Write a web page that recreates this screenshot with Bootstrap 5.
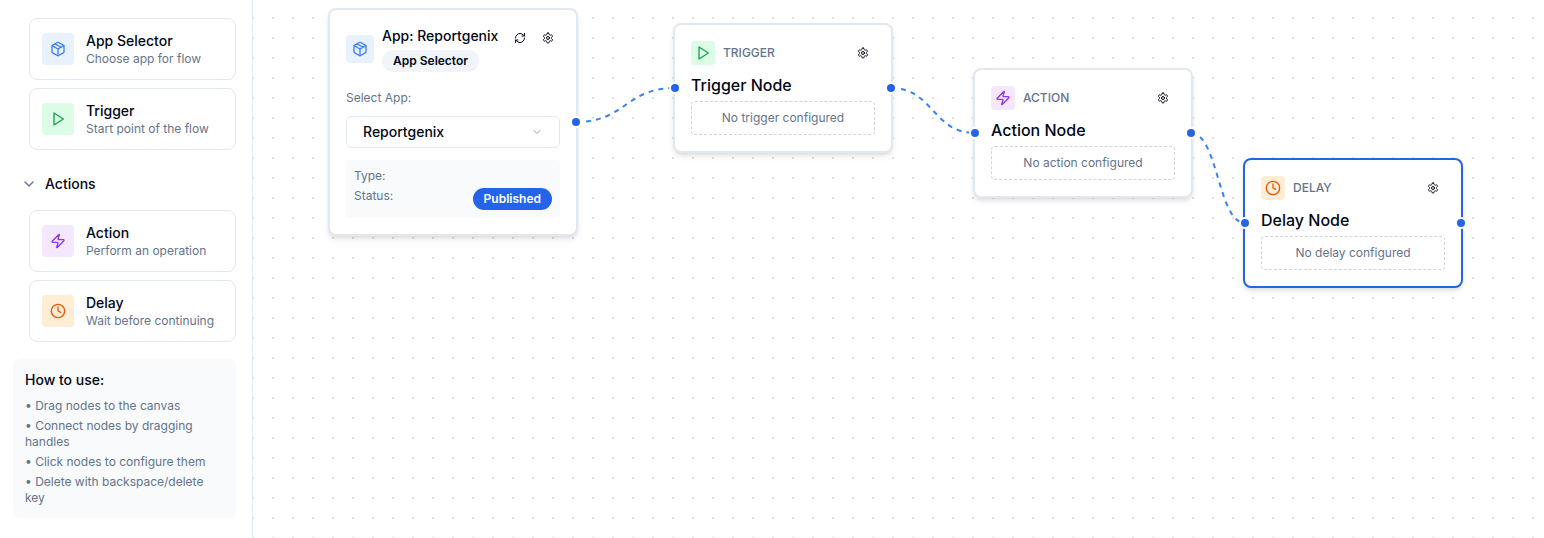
<!DOCTYPE html>
<html lang="en">
<head>
  <title>Flow Builder</title>
  <meta charset="UTF-8">
  <meta name="viewport" content="width=device-width, initial-scale=1.0">
  <link rel="stylesheet" href="https://cdn.jsdelivr.net/npm/bootstrap@5.3.0/dist/css/bootstrap.min.css">
  <style>
    body {
      font-family: Inter, "Liberation Sans", sans-serif;
      color: #020817;
      background-color: #fff;
      overflow: hidden;
    }
    svg.ico {
      fill: none;
      stroke: currentColor;
      stroke-width: 2;
      stroke-linecap: round;
      stroke-linejoin: round;
      flex-shrink: 0;
    }

    /* sidebar */
    .side-panel {
      width: 253px;
      flex-shrink: 0;
      padding: 18px 16px 0 13px;
      border-right: 1px solid #e2e8f0;
    }
    .palette-item {
      margin-left: 16px;
      margin-bottom: 8px;
      padding: 12px;
      border: 1px solid #e2e8f0;
      border-radius: 8px;
      gap: 12px;
    }
    .tile {
      border-radius: 4px;
      flex-shrink: 0;
    }
    .tile-32 { width: 32px; height: 32px; }
    .tile-28 { width: 28px; height: 28px; }
    .tile-24 { width: 24px; height: 24px; }
    .tile-blue { background-color: #eaf1fe; color: #3b82f6; }
    .tile-green { background-color: #dcfce7; color: #16a34a; }
    .tile-purple { background-color: #f3e8ff; color: #9333ea; }
    .tile-orange { background-color: #ffedd5; color: #ea580c; }
    .item-title {
      font-size: 14px;
      line-height: 20px;
      font-weight: 500;
    }
    .item-sub {
      font-size: 12px;
      line-height: 16px;
      color: #64748b;
    }
    .group-head {
      margin: 24px 0 16px 8px;
      gap: 8px;
      font-size: 14px;
      line-height: 20px;
      font-weight: 500;
      color: #64748b;
    }
    .group-head span { color: #020817; }
    .help-box {
      margin-top: 16px;
      padding: 12px;
      border-radius: 8px;
      background-color: #f8fafc;
    }
    .help-box h6 {
      font-size: 14px;
      line-height: 20px;
      font-weight: 500;
      margin-bottom: 8px;
    }
    .help-box ul {
      list-style: none;
      padding: 0;
      margin: 0;
      font-size: 12px;
      line-height: 16px;
      color: #64748b;
    }
    .help-box li + li { margin-top: 4px; }

    /* canvas */
    .flow-canvas {
      position: relative;
      flex-grow: 1;
      background-image: radial-gradient(circle, #e0e0e0 1.2px, transparent 1.2px);
      background-size: 20px 20px;
      background-position: 10px 8px;
    }
    .edge-layer {
      position: absolute;
      left: 0;
      top: 0;
      width: 100%;
      height: 100%;
    }
    .edge-layer path {
      fill: none;
      stroke: #3b82f6;
      stroke-width: 2;
      stroke-dasharray: 5 5;
    }
    .flow-node {
      position: absolute;
      width: 220px;
      padding: 16px;
      background-color: #fff;
      border: 2px solid #e2e8f0;
      border-radius: 8px;
      box-shadow: 0 4px 6px -1px rgba(0,0,0,0.1), 0 2px 4px -2px rgba(0,0,0,0.1);
    }
    .flow-node.selected { border-color: #2563eb; }
    .node-app { left: 75px; top: 8px; width: 250px; }
    .node-trigger { left: 420px; top: 23px; }
    .node-action { left: 720px; top: 68px; }
    .node-delay { left: 990px; top: 158px; }
    .handle-dot {
      position: absolute;
      top: 50%;
      width: 12px;
      height: 12px;
      border: 2px solid #fff;
      border-radius: 50%;
      background-color: #2563eb;
      transform: translate(-50%, -50%);
    }
    .handle-dot.in { left: 0; }
    .handle-dot.out { left: 100%; }
    .icon-btn {
      width: 24px;
      height: 24px;
      padding: 0;
      border: 0;
      background: transparent;
      color: #020817;
      flex-shrink: 0;
    }
    .node-kind {
      font-size: 12px;
      line-height: 16px;
      font-weight: 500;
      color: #64748b;
      text-transform: uppercase;
    }
    .node-title {
      margin-top: 8px;
      font-size: 16px;
      line-height: 24px;
      font-weight: 500;
    }
    .empty-note {
      margin-top: 4px;
      padding: 8px;
      border: 1px dashed #d1d5db;
      border-radius: 4px;
      font-size: 12px;
      line-height: 16px;
      color: #64748b;
      text-align: center;
    }
    .app-name {
      font-size: 14px;
      line-height: 20px;
      font-weight: 500;
    }
    .type-pill {
      margin-top: 4px;
      padding: 3px 11px;
      font-size: 12px;
      line-height: 16px;
      font-weight: 600;
      color: #020817;
      background-color: #f1f5f9;
    }
    .field-label {
      margin: 17px 0 9px;
      font-size: 12px;
      line-height: 18px;
      color: #64748b;
    }
    .fake-select {
      height: 32px;
      padding: 0 16px 1px 16px;
      border: 1px solid #e2e8f0;
      border-radius: 6px;
      font-size: 14px;
      font-weight: 500;
    }
    .fake-select svg { color: #94a3b8; }
    .info-box {
      margin-top: 12px;
      padding: 8px;
      border-radius: 4px;
      background-color: #f8fafc;
      font-size: 12px;
      line-height: 16px;
      color: #64748b;
    }
    .status-pill {
      padding: 3px 11px;
      font-size: 12px;
      line-height: 16px;
      font-weight: 600;
      color: #fff;
      background-color: #2563eb;
    }
  </style>
</head>
<body>
  <!-- icon set -->
  <svg width="0" height="0" class="position-absolute">
    <symbol id="i-package" viewBox="0 0 24 24">
      <path d="m7.5 4.27 9 5.15"/>
      <path d="M21 8a2 2 0 0 0-1-1.73l-7-4a2 2 0 0 0-2 0l-7 4A2 2 0 0 0 3 8v8a2 2 0 0 0 1 1.73l7 4a2 2 0 0 0 2 0l7-4A2 2 0 0 0 21 16Z"/>
      <path d="m3.3 7 8.7 5 8.7-5"/>
      <path d="M12 22V12"/>
    </symbol>
    <symbol id="i-play" viewBox="0 0 24 24"><polygon points="6 3 20 12 6 21 6 3"/></symbol>
    <symbol id="i-zap" viewBox="0 0 24 24">
      <path d="M4 14a1 1 0 0 1-.78-1.63l9.9-10.2a.5.5 0 0 1 .86.46l-1.92 6.02A1 1 0 0 0 13 10h7a1 1 0 0 1 .78 1.63l-9.9 10.2a.5.5 0 0 1-.86-.46l1.92-6.02A1 1 0 0 0 11 14z"/>
    </symbol>
    <symbol id="i-clock" viewBox="0 0 24 24"><circle cx="12" cy="12" r="10"/><polyline points="12 6 12 12 16 14"/></symbol>
    <symbol id="i-chevron" viewBox="0 0 24 24"><path d="m6 9 6 6 6-6"/></symbol>
    <symbol id="i-refresh" viewBox="0 0 24 24">
      <path d="M3 12a9 9 0 0 1 9-9 9.75 9.75 0 0 1 6.74 2.74L21 8"/>
      <path d="M21 3v5h-5"/>
      <path d="M21 12a9 9 0 0 1-9 9 9.75 9.75 0 0 1-6.74-2.74L3 16"/>
      <path d="M8 16H3v5"/>
    </symbol>
    <symbol id="i-gear" viewBox="0 0 24 24">
      <path d="M12.22 2h-.44a2 2 0 0 0-2 2v.18a2 2 0 0 1-1 1.73l-.43.25a2 2 0 0 1-2 0l-.15-.08a2 2 0 0 0-2.73.73l-.22.38a2 2 0 0 0 .73 2.73l.15.1a2 2 0 0 1 1 1.72v.51a2 2 0 0 1-1 1.74l-.15.09a2 2 0 0 0-.73 2.73l.22.38a2 2 0 0 0 2.73.73l.15-.08a2 2 0 0 1 2 0l.43.25a2 2 0 0 1 1 1.73V20a2 2 0 0 0 2 2h.44a2 2 0 0 0 2-2v-.18a2 2 0 0 1 1-1.73l.43-.25a2 2 0 0 1 2 0l.15.08a2 2 0 0 0 2.73-.73l.22-.39a2 2 0 0 0-.73-2.73l-.15-.08a2 2 0 0 1-1-1.74v-.5a2 2 0 0 1 1-1.74l.15-.09a2 2 0 0 0 .73-2.73l-.22-.38a2 2 0 0 0-2.73-.73l-.15.08a2 2 0 0 1-2 0l-.43-.25a2 2 0 0 1-1-1.73V4a2 2 0 0 0-2-2z"/>
      <circle cx="12" cy="12" r="3"/>
    </symbol>
  </svg>

  <div class="d-flex vh-100">
    <!-- left palette -->
    <aside class="side-panel">
      <div class="palette-item d-flex align-items-center">
        <div class="tile tile-32 tile-blue d-flex align-items-center justify-content-center">
          <svg class="ico" width="16" height="16"><use href="#i-package"/></svg>
        </div>
        <div>
          <div class="item-title">App Selector</div>
          <div class="item-sub">Choose app for flow</div>
        </div>
      </div>
      <div class="palette-item d-flex align-items-center">
        <div class="tile tile-32 tile-green d-flex align-items-center justify-content-center">
          <svg class="ico" width="16" height="16"><use href="#i-play"/></svg>
        </div>
        <div>
          <div class="item-title">Trigger</div>
          <div class="item-sub">Start point of the flow</div>
        </div>
      </div>

      <div class="group-head d-flex align-items-center">
        <svg class="ico" width="16" height="16"><use href="#i-chevron"/></svg>
        <span>Actions</span>
      </div>

      <div class="palette-item d-flex align-items-center">
        <div class="tile tile-32 tile-purple d-flex align-items-center justify-content-center">
          <svg class="ico" width="16" height="16"><use href="#i-zap"/></svg>
        </div>
        <div>
          <div class="item-title">Action</div>
          <div class="item-sub">Perform an operation</div>
        </div>
      </div>
      <div class="palette-item d-flex align-items-center">
        <div class="tile tile-32 tile-orange d-flex align-items-center justify-content-center">
          <svg class="ico" width="16" height="16"><use href="#i-clock"/></svg>
        </div>
        <div>
          <div class="item-title">Delay</div>
          <div class="item-sub">Wait before continuing</div>
        </div>
      </div>

      <div class="help-box">
        <h6>How to use:</h6>
        <ul>
          <li>• Drag nodes to the canvas</li>
          <li>• Connect nodes by dragging handles</li>
          <li>• Click nodes to configure them</li>
          <li>• Delete with backspace/delete key</li>
        </ul>
      </div>
    </aside>

    <!-- flow canvas, nodes are placed by their canvas coordinates -->
    <main class="flow-canvas">
      <svg class="edge-layer">
        <path d="M323 122 C372.5 122 372.5 88 422 88"/>
        <path d="M638 88 C680 88 680 133 722 133"/>
        <path d="M938 133 C965 133 965 223 992 223"/>
      </svg>

      <div class="flow-node node-app">
        <div class="d-flex align-items-center gap-2">
          <div class="tile tile-28 tile-blue d-flex align-items-center justify-content-center">
            <svg class="ico" width="16" height="16"><use href="#i-package"/></svg>
          </div>
          <div class="flex-grow-1">
            <div class="app-name">App: Reportgenix</div>
            <span class="badge rounded-pill type-pill">App Selector</span>
          </div>
          <div class="d-flex gap-1 align-self-start">
            <button class="icon-btn d-flex align-items-center justify-content-center"><svg class="ico" width="12" height="12"><use href="#i-refresh"/></svg></button>
            <button class="icon-btn d-flex align-items-center justify-content-center"><svg class="ico" width="12" height="12"><use href="#i-gear"/></svg></button>
          </div>
        </div>
        <div class="field-label">Select App:</div>
        <div class="fake-select d-flex align-items-center justify-content-between">
          <span>Reportgenix</span>
          <svg class="ico" width="12" height="12"><use href="#i-chevron"/></svg>
        </div>
        <div class="info-box">
          <div>Type:</div>
          <div class="d-flex justify-content-between align-items-start mt-1">
            <span>Status:</span>
            <span class="badge rounded-pill status-pill">Published</span>
          </div>
        </div>
        <span class="handle-dot out"></span>
      </div>

      <div class="flow-node node-trigger">
        <div class="d-flex align-items-center gap-2">
          <div class="tile tile-24 tile-green d-flex align-items-center justify-content-center">
            <svg class="ico" width="16" height="16"><use href="#i-play"/></svg>
          </div>
          <span class="node-kind flex-grow-1">Trigger</span>
          <button class="icon-btn d-flex align-items-center justify-content-center"><svg class="ico" width="12" height="12"><use href="#i-gear"/></svg></button>
        </div>
        <div class="node-title">Trigger Node</div>
        <div class="empty-note">No trigger configured</div>
        <span class="handle-dot in"></span>
        <span class="handle-dot out"></span>
      </div>

      <div class="flow-node node-action">
        <div class="d-flex align-items-center gap-2">
          <div class="tile tile-24 tile-purple d-flex align-items-center justify-content-center">
            <svg class="ico" width="16" height="16"><use href="#i-zap"/></svg>
          </div>
          <span class="node-kind flex-grow-1">Action</span>
          <button class="icon-btn d-flex align-items-center justify-content-center"><svg class="ico" width="12" height="12"><use href="#i-gear"/></svg></button>
        </div>
        <div class="node-title">Action Node</div>
        <div class="empty-note">No action configured</div>
        <span class="handle-dot in"></span>
        <span class="handle-dot out"></span>
      </div>

      <div class="flow-node node-delay selected">
        <div class="d-flex align-items-center gap-2">
          <div class="tile tile-24 tile-orange d-flex align-items-center justify-content-center">
            <svg class="ico" width="16" height="16"><use href="#i-clock"/></svg>
          </div>
          <span class="node-kind flex-grow-1">Delay</span>
          <button class="icon-btn d-flex align-items-center justify-content-center"><svg class="ico" width="12" height="12"><use href="#i-gear"/></svg></button>
        </div>
        <div class="node-title">Delay Node</div>
        <div class="empty-note">No delay configured</div>
        <span class="handle-dot in"></span>
        <span class="handle-dot out"></span>
      </div>
    </main>
  </div>

  <script src="https://cdn.jsdelivr.net/npm/bootstrap@5.3.0/dist/js/bootstrap.bundle.min.js"></script>
</body>
</html>
